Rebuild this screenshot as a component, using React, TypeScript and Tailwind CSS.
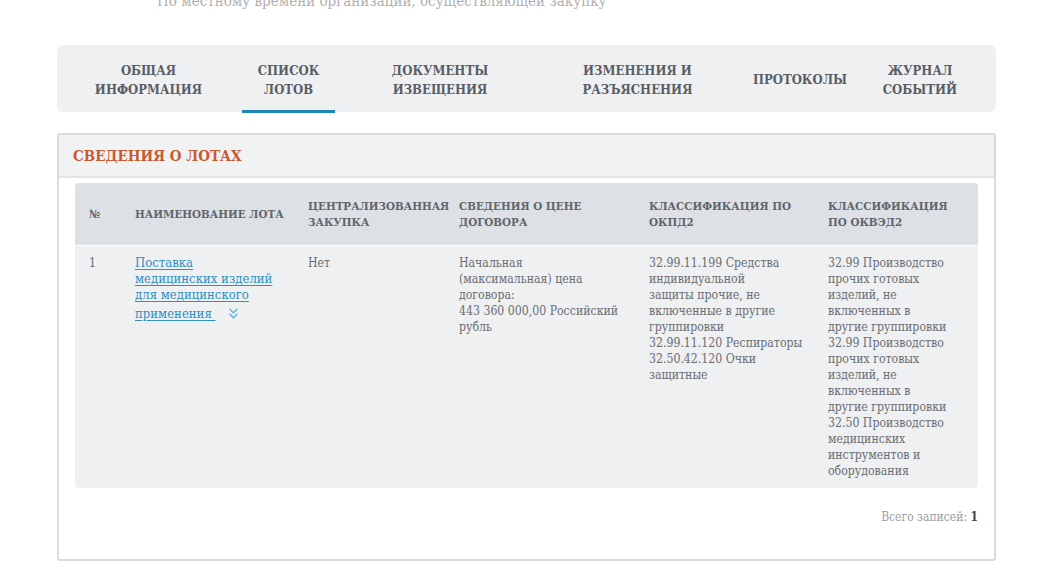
import { ChevronsDown } from 'lucide-react';

const FONT = "font-['Roboto_Slab','DejaVu_Serif',serif] font-stretch-condensed";

const TABS = [
  { label: ['ОБЩАЯ', 'ИНФОРМАЦИЯ'], cls: 'ml-[22px] w-[139px]' },
  { label: ['СПИСОК', 'ЛОТОВ'], cls: 'ml-[24px] w-[93px]', active: true },
  { label: ['ДОКУМЕНТЫ', 'ИЗВЕЩЕНИЯ'], cls: 'ml-[37px] w-[136px]' },
  { label: ['ИЗМЕНЕНИЯ И', 'РАЗЪЯСНЕНИЯ'], cls: 'ml-[60px] w-[139px]' },
  { label: ['ПРОТОКОЛЫ'], cls: 'ml-[32px] w-[122px]' },
  { label: ['ЖУРНАЛ', 'СОБЫТИЙ'], cls: 'ml-[6px] w-[106px]' },
];

const COLS = ['w-[46px]', 'w-[173px]', 'w-[151px]', 'w-[190px]', 'w-[179px]', 'w-[163px]'];

const HEAD = [
  ['№'],
  ['НАИМЕНОВАНИЕ ЛОТА'],
  ['ЦЕНТРАЛИЗОВАННАЯ', 'ЗАКУПКА'],
  ['СВЕДЕНИЯ О ЦЕНЕ', 'ДОГОВОРА'],
  ['КЛАССИФИКАЦИЯ ПО', 'ОКПД2'],
  ['КЛАССИФИКАЦИЯ', 'ПО ОКВЭД2'],
];

function Lines({ lines }: { lines: string[] }) {
  return (
    <>
      {lines.map((l, i) => (
        <div key={i} className="whitespace-nowrap">{l}</div>
      ))}
    </>
  );
}

export default function App() {
  return (
    <div className={`${FONT} w-[1045px] h-[578px] overflow-hidden bg-white`}>
      <div className="-mt-[9px] pl-[157px] text-[15px] leading-[20px] text-[#b0b0b0]">
        По местному времени организации, осуществляющей закупку
      </div>

      <div className="mx-[57px] mt-[34px] w-[939px]">
        {/* tabs */}
        <div className="flex h-[67px] items-stretch rounded-md bg-[#eef0f2]">
          {TABS.map((t) => (
            <div
              key={t.label.join(' ')}
              className={`${t.cls} relative flex shrink-0 flex-col items-center justify-center pt-[2px] text-center text-[13px] font-bold leading-[19px] text-[#5a5e64]`}
            >
              <Lines lines={t.label} />
              {t.active && <div className="absolute -bottom-[1px] left-0 right-0 h-[3px] bg-[#1f86b4]" />}
            </div>
          ))}
        </div>

        {/* card */}
        <div className="mt-[21px] h-[428px] rounded-[3px] border-2 border-[#d9dbde] bg-white">
          <div className="flex h-[43px] items-center border-b-2 border-[#e2e4e7] bg-[#f1f2f4] pl-[14px] pt-[1px] text-[15px] font-bold text-[#c85a32]">
            СВЕДЕНИЯ О ЛОТАХ
          </div>

          <div className="mx-[16px] mt-[5px]">
            <div className="flex h-[62px] items-center rounded-t-[4px] bg-[#dde1e6] text-[11.5px] font-bold leading-[16px] text-[#61656a]">
              {HEAD.map((h, i) => (
                <div key={i} className={`${COLS[i]} shrink-0 pl-[14px]`}>
                  <Lines lines={h} />
                </div>
              ))}
            </div>

            <div className="mt-[1px] flex h-[242px] rounded-b-[4px] bg-[#eef0f2] pt-[9px] text-[12.2px] leading-[16px] text-[#6a6d70]">
              <div className={`${COLS[0]} shrink-0 pl-[14px]`}>1</div>
              <div className={`${COLS[1]} shrink-0 pl-[14px] text-[13px] text-[#2f8fc0]`}>
                <div className="underline underline-offset-2">
                  <div>Поставка</div>
                  <div>медицинских изделий</div>
                  <div>для медицинского</div>
                  <div className="mt-[2px]">
                    <span>применения&nbsp;</span>
                    <ChevronsDown className="ml-[10px] inline-block h-[17px] w-[17px] align-[-4px] text-[#5aaad6]" strokeWidth={1.7} />
                  </div>
                </div>
              </div>
              <div className={`${COLS[2]} shrink-0 pl-[14px]`}>Нет</div>
              <div className={`${COLS[3]} shrink-0 pl-[14px]`}>
                <Lines lines={['Начальная', '(максимальная) цена', 'договора:', '443 360 000,00 Российский', 'рубль']} />
              </div>
              <div className={`${COLS[4]} shrink-0 pl-[14px]`}>
                <Lines
                  lines={[
                    '32.99.11.199 Средства',
                    'индивидуальной',
                    'защиты прочие, не',
                    'включенные в другие',
                    'группировки',
                    '32.99.11.120 Респираторы',
                    '32.50.42.120 Очки',
                    'защитные',
                  ]}
                />
              </div>
              <div className={`${COLS[5]} shrink-0 pl-[14px]`}>
                <Lines
                  lines={[
                    '32.99 Производство',
                    'прочих готовых',
                    'изделий, не',
                    'включенных в',
                    'другие группировки',
                    '32.99 Производство',
                    'прочих готовых',
                    'изделий, не',
                    'включенных в',
                    'другие группировки',
                    '32.50 Производство',
                    'медицинских',
                    'инструментов и',
                    'оборудования',
                  ]}
                />
              </div>
            </div>

            <div className="mt-[21px] text-right text-[12px] leading-[16px] text-[#9a9da0]">
              Всего записей: <span className="font-bold text-[#444]">1</span>
            </div>
          </div>
        </div>
      </div>
    </div>
  );
}
